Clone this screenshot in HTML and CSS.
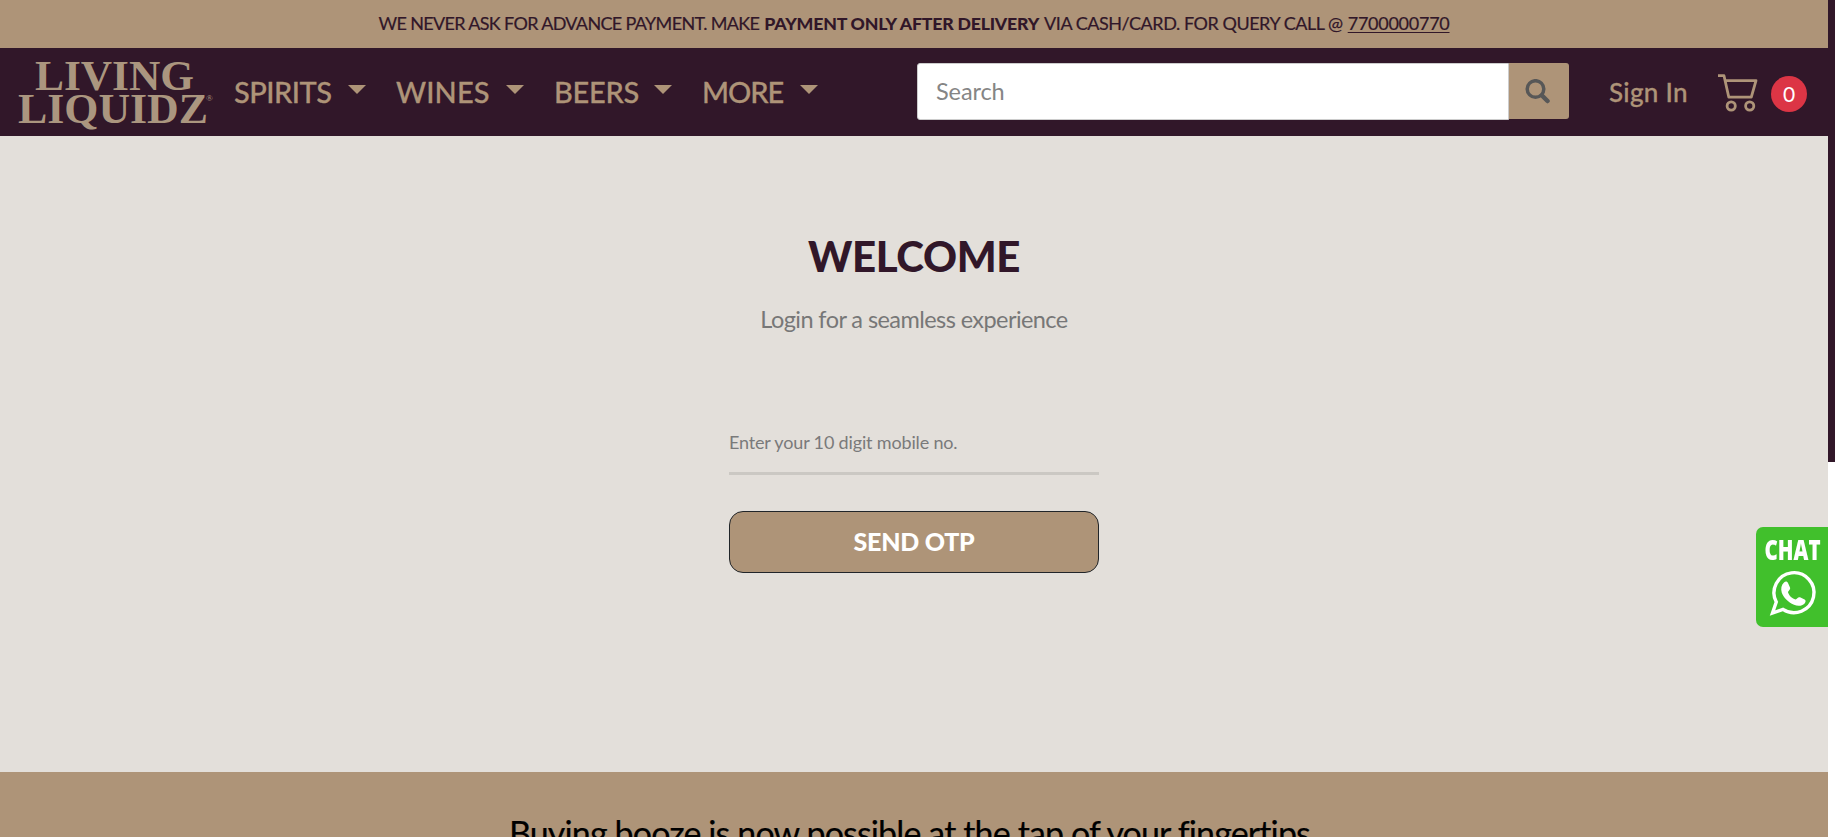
FILE: index.html
```
<!DOCTYPE html>
<html lang="en">
<head>
<meta charset="utf-8">
<title>Living Liquidz</title>
<link rel="stylesheet" href="styles.css">
</head>
<body>
<div class="page">
  <div class="notice">
    <span class="notice-a">WE NEVER ASK FOR ADVANCE PAYMENT. MAKE</span>
    <b class="notice-b">PAYMENT ONLY AFTER DELIVERY</b>
    <span class="notice-c">VIA CASH/CARD. FOR QUERY CALL @</span>
    <a class="notice-d">7700000770</a>
  </div>
  <header class="header">
    <svg class="logo" width="200" height="80" viewBox="0 0 200 80">
      <text x="19" y="37.500" font-size="42" textLength="159" lengthAdjust="spacingAndGlyphs">LIVING</text>
      <text x="2" y="70.500" font-size="42" textLength="190" lengthAdjust="spacingAndGlyphs">LIQUIDZ</text>
      <text class="reg" x="190" y="49" font-size="9">®</text>
    </svg>
    <nav class="nav">
      <a class="item spirits"><span>SPIRITS</span><i class="caret"></i></a>
      <a class="item wines"><span>WINES</span><i class="caret"></i></a>
      <a class="item beers"><span>BEERS</span><i class="caret"></i></a>
      <a class="item more"><span>MORE</span><i class="caret"></i></a>
    </nav>
    <form class="search">
      <input class="search-input" type="text" placeholder="Search">
      <button class="search-btn" type="button">
        <svg width="25" height="25" viewBox="0 0 25 25" fill="none" stroke="#575757"><circle cx="10.500" cy="10" r="8.300" stroke-width="3.500"/><path d="M17 16.500l5.500 5.500" stroke-width="4.500" stroke-linecap="round"/></svg>
      </button>
    </form>
    <a class="signin">Sign In</a>
    <a class="cart">
      <svg width="40" height="38" viewBox="0 0 40 38" fill="none" stroke="#ae9478" stroke-width="2.800">
        <path d="M0 1.700h6l4.800 21.500h22.500L38 6.700H7.500" stroke-linejoin="round"/>
        <circle cx="13.200" cy="32" r="4.100"/><circle cx="31.700" cy="32" r="4.100"/>
      </svg>
      <span class="count">0</span>
    </a>
  </header>
  <main class="main">
    <h1 class="title">WELCOME</h1>
    <p class="lead">Login for a seamless experience</p>
    <input class="phone" type="text" placeholder="Enter your 10 digit mobile no.">
    <button class="send" type="button">SEND OTP</button>
  </main>
  <footer class="footer">Buying booze is now possible at the tap of your fingertips</footer>
</div>
<div class="rail"><div class="thumb"></div></div>
<a class="chat">
  <svg width="72" height="100" viewBox="0 0 72 100">
    <text x="8.500" y="32.500" font-size="29" textLength="56" lengthAdjust="spacingAndGlyphs">CHAT</text>
    <path d="M16.500 86L20.300 75A20 20 0 1 1 27 82.400Z" fill="none" stroke="#fff" stroke-width="3.400"/>
    <path d="M29 55.500c1.500-1.500 3-1.500 4 .5l2 4.500c.8 2-1.800 3.300-2 4.800 1 3.500 4.500 6.500 7.500 7.200 1.500-.3 2.600-3 4.500-2.200l4.600 2.300c1.500.9 1.200 2.500 0 3.800-2.500 2.700-6.600 3.100-10.600 1.400-6-2.500-10.500-7.300-12.200-12-1.200-4-.5-7.800 2.200-10.300z" transform="translate(-1 0)" fill="#fff"/>
  </svg>
</a>
</body>
</html>
```
FILE: styles.css
```
* { box-sizing: border-box; }
body { margin: 0; height: 837px; overflow: hidden; display: flex; background: #fff; font-family: Lato, sans-serif; }
.page { width: 1828px; height: 837px; overflow: hidden; background: #e3dfda; }
.rail { width: 7px; background: #fff; }
.thumb { height: 462px; background: #311729; }
input, button { font-family: inherit; margin: 0; }

.notice { height: 48px; display: flex; justify-content: center; gap: 5px; background: #ae9478; color: #311729; font-size: 18px; line-height: 47px; white-space: nowrap; -webkit-text-stroke: .2px; }
.notice-a { letter-spacing: -.66px; }
.notice-b { letter-spacing: -.2px; font-weight: 900; font-size: 17.7px; -webkit-text-stroke: 0; }
.notice-c { letter-spacing: -.46px; }
.notice-d { letter-spacing: -.26px; text-decoration: underline; text-decoration-thickness: 1px; text-underline-offset: 2px; }

.header { height: 88px; display: flex; align-items: center; padding-left: 16px; background: #311729; color: #ae9478; }
.logo { fill: #ab967f; font-family: "Liberation Serif", serif; font-weight: 700; flex: none; }
.logo .reg { font-weight: 400; }
.nav { display: flex; width: 701px; padding-left: 18px; font-size: 29px; font-weight: 500; line-height: 36px; -webkit-text-stroke: .3px; }
.item { display: flex; align-items: center; justify-content: space-between; margin-right: 30px; margin-top: -1px; }
.spirits { width: 132px; letter-spacing: -.5px; }
.wines { width: 128px; letter-spacing: .1px; }
.beers { width: 118px; letter-spacing: -.3px; }
.more { width: 116px; letter-spacing: -1px; margin-right: 0; }
.caret { border: 9px solid transparent; border-top-color: currentColor; border-bottom: 0; margin-top: -4px; }

.search { display: flex; width: 652px; height: 57px; align-items: flex-start; margin-top: -1px; }
.search-input { width: 592px; height: 57px; border: 1px solid #ccc; border-radius: 3px 0 0 3px; background: #fff; padding: 0 0 1px 18px; font-size: 23.5px; letter-spacing: -.1px; color: #333; }
.search-input::placeholder { color: #858585; opacity: 1; }
.search-btn { width: 60px; height: 56px; border: 0; border-radius: 0 3px 3px 0; background: #ae9478; display: flex; align-items: center; justify-content: center; padding: 0 3px 0 0; }
.signin { width: 80px; margin-left: 40px; font-size: 26px; font-weight: 500; letter-spacing: .3px; line-height: 32px; white-space: nowrap; margin-top: -1px; -webkit-text-stroke: .3px; }
.cart { display: flex; align-items: center; margin-left: 29px; gap: 13px; margin-top: 2px; }
.count { width: 36px; height: 36px; border-radius: 50%; background: #dc3545; color: #fff; font-size: 21px; line-height: 35px; text-align: center; margin-top: 2px; }

.main { height: 636px; padding-top: 95px; display: flex; flex-direction: column; align-items: center; }
.title { margin: 0; font-size: 42px; font-weight: 900; line-height: 50px; letter-spacing: -.38px; color: #311729; }
.lead { margin: 23px 0 96px; font-size: 23.5px; line-height: 30px; letter-spacing: -.57px; color: #777; }
.phone { width: 370px; height: 45px; padding: 0 0 18px; border: 0; border-bottom: 3px solid #cbc8c3; background: transparent; font-size: 18px; letter-spacing: -.16px; }
.phone::placeholder { color: #7a7a7a; opacity: 1; }
.send { width: 370px; height: 62px; margin-top: 36px; padding: 0 0 2px; border: 1px solid #212529; border-radius: 14px; background: #ae9478; color: #fff; font-size: 25px; font-weight: 900; letter-spacing: -.24px; }
.footer { height: 200px; padding-top: 41px; background: #ae9478; color: #000; font-size: 34px; line-height: 40px; letter-spacing: -.87px; text-align: center; padding-right: 9px; -webkit-text-stroke: .2px; }

.chat { position: fixed; right: 7px; top: 527px; width: 72px; height: 100px; border-radius: 7px 0 0 7px; background: #41c02c; fill: #fff; font-family: "Open Sans", sans-serif; font-weight: 800; }
```
